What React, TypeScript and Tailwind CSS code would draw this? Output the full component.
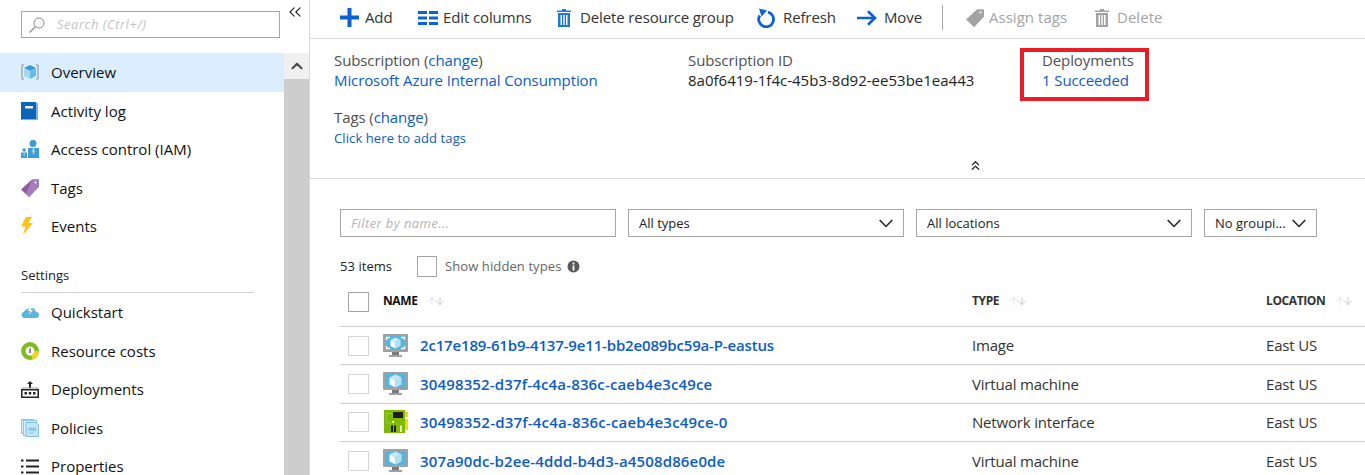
import React from "react";
import { ChevronUp, ChevronsLeft, ChevronsUp, ArrowUp, ArrowDown } from "lucide-react";

const font = "font-['Open_Sans','Noto_Sans',sans-serif]";

const CubeGlyph = ({ x, y, s }: { x: number; y: number; s: number }) => (
  <g transform={`translate(${x} ${y}) scale(${s})`}>
    <path d="M6 0 12 3 6 6 0 3Z" fill="#c4e8f7" />
    <path d="M0 3 6 6V13L0 10Z" fill="#f2fafd" />
    <path d="M12 3 6 6V13L12 10Z" fill="#b4e0f3" />
  </g>
);

const OverviewIcon = () => (
  <svg width="18" height="16" viewBox="0 0 18 16">
    <path d="M3 1H1V15H3M15 1H17V15H15" fill="none" stroke="#8a8a8a" strokeWidth="1" />
    <path d="M9 1 15 4 9 7 3 4Z" fill="#3a9bd1" />
    <path d="M3 4 9 7V15L3 12Z" fill="#a4d8f0" />
    <path d="M15 4 9 7V15L15 12Z" fill="#65bce4" />
  </svg>
);
const ActivityIcon = () => (
  <svg width="17" height="18" viewBox="0 0 17 18">
    <path d="M0 0H15V1H16.5V17.5H0Z" fill="#0a64b8" />
    <rect x="15" y="1" width="2" height="17" fill="#7db2e0" />
    <rect x="4" y="4" width="8" height="2.5" fill="#e6f1fb" />
  </svg>
);
const IamIcon = () => (
  <svg width="18" height="18" viewBox="0 0 18 18">
    <circle cx="12" cy="3.4" r="3.5" fill="#3e9ed3" />
    <path d="M7 8H18V18H7Z" fill="#3e9ed3" />
    <path d="M12 8 11 11 12.5 15 14 11 13 8Z" fill="#a8d6ee" />
    <circle cx="3.2" cy="10" r="1.8" fill="#3e9ed3" />
    <rect x="0" y="12.5" width="6" height="5.5" fill="#3e9ed3" />
    <rect x="2.7" y="13" width="1" height="3" fill="#a8d6ee" />
  </svg>
);
const TagIcon = ({ c = "#8d5ba6", d = "#a67dbb" }: { c?: string; d?: string }) => (
  <svg width="18" height="18" viewBox="0 0 18 18">
    <path d="M11 0.5H18V7.5L8 18 0 10.5Z" fill={c} />
    <path d="M11 0.5H18V7.5L8 18 5 14.5Z" fill={d} />
    <circle cx="14.5" cy="3.5" r="1" fill="#fff" />
  </svg>
);
const BoltIcon = () => (
  <svg width="12" height="18" viewBox="0 0 12 18">
    <path d="M5 0H11L7.5 6H12L2 18 4.5 9.5H0Z" fill="#fcc419" />
  </svg>
);
const CloudIcon = () => (
  <svg width="18" height="12" viewBox="0 0 18 12">
    <path d="M3.5 12A3.2 3.2 0 0 1 3 5.7 4 4 0 0 1 7 3 5 5 0 0 1 15 6 3 3 0 0 1 15 12Z" fill="#59b4de" />
    <path d="M10 0 7 5H9.5L7.5 9 12 4H9.7L11.5 0Z" fill="#fff" />
  </svg>
);
const CostIcon = () => (
  <svg width="18" height="18" viewBox="0 0 18 18">
    <circle cx="9" cy="9" r="6.7" fill="#fff" stroke="#7fba1f" strokeWidth="4.4" />
    <path d="M15.7 9A6.7 6.7 0 0 1 11 15.4" fill="none" stroke="#fcd116" strokeWidth="4.4" />
    <rect x="8.4" y="6.5" width="1.4" height="4.5" fill="#555" />
  </svg>
);
const DeployIcon = () => (
  <svg width="18" height="17" viewBox="0 0 18 17">
    <path d="M9 0 12 3H10V7H8V3H6Z" fill="#222" />
    <path d="M1 7H17" stroke="#999" />
    <rect x=".75" y="8.75" width="16.5" height="7.5" fill="#fff" stroke="#222" strokeWidth="1.5" />
    <path d="M3.5 11H6V13.5H3.5ZM7.75 11H10.25V13.5H7.75ZM12 11H14.5V13.5H12Z" fill="#222" />
  </svg>
);
const PolicyIcon = () => (
  <svg width="18" height="18" viewBox="0 0 18 18">
    <rect x=".5" y=".5" width="12" height="14" fill="#d7eef9" stroke="#8cc8e8" />
    <rect x="2.5" y="1.5" width="13" height="15" fill="#d7eef9" stroke="#8cc8e8" />
    <path d="M5 3.5H15L17.5 6V17.5H5Z" fill="#c5e5f5" stroke="#7dc1e5" />
    <path d="M7.5 8.5H15V12H7.5ZM7.5 13.5H12.5V14.5H7.5Z" fill="#8fc8e6" />
  </svg>
);
const ListIcon = () => (
  <svg width="18" height="17" viewBox="0 0 18 17">
    <path d="M0 1.5H2.5V3.5H0ZM0 7.5H2.5V9.5H0ZM0 13.5H2.5V15.5H0Z" fill="#222" />
    <path d="M5 2.5H18M5 8.5H18M5 14.5H18" stroke="#222" strokeWidth="2" />
  </svg>
);

const Monitor = ({ image }: { image?: boolean }) => (
  <svg width="26" height="24" viewBox="0 0 26 24">
    <rect x="0" y="0" width="25" height="18" rx="1" fill="#a0a1a2" />
    <rect x="2" y="2" width="21" height="14" fill="#59b4d9" />
    <rect x="9" y="18" width="7" height="3" fill="#7a7a7a" />
    <rect x="6" y="21" width="13" height="2" fill="#a0a1a2" />
    {image && (
      <path d="M3.5 6V3.5H7M18 3.5H21.5V6M21.5 12V14.5H18M7 14.5H3.5V12" fill="none" stroke="#fff" strokeWidth="1.3" />
    )}
    <CubeGlyph x={image ? 7.5 : 6.5} y={image ? 3.5 : 2.5} s={image ? 0.84 : 1} />
  </svg>
);
const Nic = () => (
  <svg width="26" height="24" viewBox="0 0 26 24">
    <rect x="1" y="0" width="21" height="23" fill="#7fba00" />
    <rect x="22" y="2" width="3" height="5" fill="#fcd116" />
    <rect x="22" y="9" width="3" height="11" fill="#fcd116" />
    <rect x="10" y="2" width="10" height="6" fill="#1e1e1e" />
    <path d="M3.5 3.5H10M3.5 3.5V13H8" fill="none" stroke="#a5d14a" strokeWidth=".8" />
    <rect x="8" y="15.5" width="2" height="6.5" fill="#1e1e1e" />
    <rect x="11" y="15.5" width="2" height="6.5" fill="#1e1e1e" />
    <rect x="17" y="15.5" width="2" height="6.5" fill="#e4efc8" />
    <rect x="9" y="11" width="2" height="2" fill="#e4efc8" />
  </svg>
);

const Trash = ({ c }: { c: string }) => (
  <svg width="14" height="18" viewBox="0 0 14 18">
    <path d="M5 0H9V1.5H14V3H0V1.5H5Z" fill={c} />
    <path d="M1 4H13V18H1ZM3.5 6V16H5V6ZM6.3 6V16H7.7V6ZM9 6V16H10.5V6Z" fill={c} fillRule="evenodd" />
  </svg>
);

const SearchGlyph = () => (
  <svg width="16" height="16" viewBox="0 0 16 16">
    <circle cx="10" cy="6" r="5" fill="none" stroke="#8a8a8a" strokeWidth="1" />
    <path d="M6.5 9.5 .5 15.5" stroke="#8a8a8a" strokeWidth="1.2" />
  </svg>
);

const Caret = () => (
  <svg width="14" height="9" viewBox="0 0 14 9">
    <path d="M.7 1 7 7.5 13.3 1" fill="none" stroke="#222" strokeWidth="1.5" />
  </svg>
);

const nav1 = [
  { t: "Overview", i: <OverviewIcon />, active: true },
  { t: "Activity log", i: <ActivityIcon /> },
  { t: "Access control (IAM)", i: <IamIcon /> },
  { t: "Tags", i: <TagIcon /> },
  { t: "Events", i: <BoltIcon /> },
];
const nav2 = [
  { t: "Quickstart", i: <CloudIcon /> },
  { t: "Resource costs", i: <CostIcon /> },
  { t: "Deployments", i: <DeployIcon /> },
  { t: "Policies", i: <PolicyIcon /> },
  { t: "Properties", i: <ListIcon /> },
];

const NavRow = ({ t, i, active }: { t: string; i: React.ReactNode; active?: boolean }) => (
  <div className={`flex h-[38.5px] shrink-0 items-center pl-[21px] text-[15px] text-[#111] ${active ? "bg-[#daeeff]" : ""}`}>
    <span className="flex w-[30px] shrink-0 items-center">{i}</span>
    <span>{t}</span>
  </div>
);

const Tool = ({ icon, label, off, cls }: { icon: React.ReactNode; label: string; off?: boolean; cls: string }) => (
  <div className={`flex items-center ${cls} text-[15px] ${off ? "tracking-[0.03px] text-[#a3a3a3]" : "tracking-[-0.12px] text-[#333]"}`}>
    {icon}
    <span>{label}</span>
  </div>
);

const Select = ({ label, w }: { label: string; w: string }) => (
  <div className={`flex h-[28px] ${w} shrink-0 items-center justify-between border border-[#a6a6a6] pl-[10px] pr-[10px] text-[13px] text-[#222]`}>
    <span className="pt-[2px]">{label}</span>
    <Caret />
  </div>
);

const Sort = () => (
  <span className="ml-[9px] flex">
    <ArrowUp size={12} strokeWidth={1} color="#c4c4c4" className="-mr-[4px]" />
    <ArrowDown size={12} strokeWidth={1} color="#9a9a9a" />
  </span>
);

const rows = [
  { n: "2c17e189-61b9-4137-9e11-bb2e089bc59a-P-eastus", t: "Image", i: <Monitor image />, c: "tracking-[-0.16px]" },
  { n: "30498352-d37f-4c4a-836c-caeb4e3c49ce", t: "Virtual machine", i: <Monitor />, c: "tracking-[0.15px]" },
  { n: "30498352-d37f-4c4a-836c-caeb4e3c49ce-0", t: "Network interface", i: <Nic />, c: "tracking-[0.19px]" },
  { n: "307a90dc-b2ee-4ddd-b4d3-a4508d86e0de", t: "Virtual machine", i: <Monitor />, c: "tracking-[0.15px]" },
];

export default function App() {
  return (
    <div className={`flex h-[475px] w-[1365px] overflow-hidden bg-white ${font}`}>
      <aside className="relative flex w-[310px] shrink-0 border-r border-[#d9d9d9]">
        <div className="flex w-[284px] flex-col">
          <div className="flex h-[53px] shrink-0 items-start pl-[21px] pt-[11px]">
            <div className="flex h-[27px] w-[259px] items-center border border-[#a6a6a6] pl-[7px] text-[13px] italic tracking-[0.5px] text-[#c4c4c4]">
              <SearchGlyph />
              <span className="ml-[12px]">Search (Ctrl+/)</span>
            </div>
          </div>
          {nav1.map((n) => (
            <NavRow key={n.t} {...n} />
          ))}
          <div className="mx-[21px] h-[47.5px] w-[233px] shrink-0 border-b border-[#d2d2d2] pt-[20px] text-[13px] font-medium leading-[18px] text-[#222]">
            Settings
          </div>
          {nav2.map((n) => (
            <NavRow key={n.t} {...n} />
          ))}
        </div>
        <div className="mt-[53px] flex w-[25px] flex-col bg-[#cdcdcd]">
          <div className="flex h-[26px] items-center justify-center bg-[#f0f0f0]">
            <ChevronUp size={18} strokeWidth={3} color="#505050" />
          </div>
        </div>
        <ChevronsLeft size={20} strokeWidth={1.3} color="#222" className="absolute left-[285px] top-[2px]" />
      </aside>

      <main className="flex min-w-0 flex-1 flex-col">
        <div className="flex h-[39px] shrink-0 items-center border-b border-[#d9d9d9] pb-[3px] pl-[30px]">
          <Tool
            cls="w-[78px]"
            label="Add"
            icon={
              <svg width="19" height="19" viewBox="0 0 19 19" className="mr-[6px]">
                <path d="M7.5 0H11.5V7.5H19V11.5H11.5V19H7.5V11.5H0V7.5H7.5Z" fill="#0b62d0" />
              </svg>
            }
          />
          <Tool
            cls="w-[139px]"
            label="Edit columns"
            icon={
              <svg width="20" height="14" viewBox="0 0 20 14" className="mr-[5px]">
                <path d="M0 0H9V3H0ZM11 0H20V3H11ZM0 5.5H9V8.5H0ZM11 5.5H20V8.5H11ZM0 11H9V14H0ZM11 11H20V14H11Z" fill="#0b62d0" />
              </svg>
            }
          />
          <Tool
            cls="w-[200px]"
            label="Delete resource group"
            icon={
              <span className="mr-[9px] flex">
                <Trash c="#1e78d2" />
              </span>
            }
          />
          <Tool
            cls="w-[100px]"
            label="Refresh"
            icon={
              <svg width="19" height="20" viewBox="0 0 19 20" className="mr-[7px]">
                <path d="M11 4.2A7.4 7.4 0 1 1 2.8 7.5" fill="none" stroke="#0b62d0" strokeWidth="2.8" />
                <path d="M2 0.5 10 2.5 4.5 8.5Z" fill="#0b62d0" />
              </svg>
            }
          />
          <Tool
            cls="w-[85px]"
            label="Move"
            icon={
              <svg width="20" height="16" viewBox="0 0 20 16" className="mr-[7px]">
                <path d="M0 8H18M11 1.2 18 8 11 14.8" fill="none" stroke="#0b62d0" strokeWidth="2.6" />
              </svg>
            }
          />
          <div className="mr-[23px] h-[25px] w-px bg-[#a6a6a6]" />
          <Tool cls="w-[129px]" off label="Assign tags" icon={<span className="mr-[5px] flex"><TagIcon c="#a3a3a3" d="#a3a3a3" /></span>} />
          <Tool cls="w-[80px]" off label="Delete" icon={<span className="mr-[8px] flex"><Trash c="#a3a3a3" /></span>} />
        </div>

        <div className="flex h-[140px] shrink-0 flex-col border-b border-[#d9d9d9] pl-[24px] pt-[11px]">
          <div className="flex h-[40px] shrink-0 text-[15px] leading-[20px] tracking-[-0.1px]">
            <div className="w-[354px]">
              <div className="text-[#505050]">
                Subscription (<span className="text-[#0b5cc9]">change</span>)
              </div>
              <div className="text-[#0b5cc9]">Microsoft Azure Internal Consumption</div>
            </div>
            <div className="w-[354px]">
              <div className="text-[#505050]">Subscription ID</div>
              <div className="tracking-[0.01px] text-[#222]">8a0f6419-1f4c-45b3-8d92-ee53be1ea443</div>
            </div>
            <div className="-ml-[18px] mt-[2px] h-[45px] w-[121px] shrink-0 pl-[18px] outline-4 outline-[#ed1c24]">
              <div className="-mt-[2px] text-[#505050]">Deployments</div>
              <div className="text-[#0b5cc9]">1 Succeeded</div>
            </div>
          </div>
          <div className="mt-[17px] text-[15px] leading-[20px] tracking-[-0.1px] text-[#505050]">
            Tags (<span className="text-[#0b5cc9]">change</span>)
          </div>
          <div className="mt-[1px] text-[13px] leading-[20px] tracking-[0.1px] text-[#0b5cc9]">Click here to add tags</div>
          <div className="mt-[10px] flex w-[1282px] justify-center">
            <ChevronsUp size={15} strokeWidth={2} color="#222" />
          </div>
        </div>

        <div className="flex shrink-0 gap-[12px] pl-[30px] pt-[30px]">
          <div className="flex h-[28px] w-[276px] shrink-0 items-center border border-[#a6a6a6] pl-[10px] pt-[1px] text-[13px] italic tracking-[0.4px] text-[#b4b4b4]">
            Filter by name...
          </div>
          <Select label="All types" w="w-[276px]" />
          <Select label="All locations" w="w-[276px]" />
          <Select label="No groupi..." w="w-[113px]" />
        </div>

        <div className="mt-[18px] flex h-[22px] shrink-0 items-center pl-[30px] text-[13px]">
          <span className="w-[77px] pt-[2px] tracking-[0.05px] text-[#222]">53 items</span>
          <span className="mr-[8px] h-[21px] w-[20px] border border-[#a6a6a6]" />
          <span className="pt-[1px] tracking-[0.1px] text-[#666]">Show hidden types</span>
          <svg width="13" height="13" viewBox="0 0 13 13" className="ml-[6px]">
            <circle cx="6.5" cy="6.5" r="6" fill="#5a5a5a" />
            <path d="M5.6 5.5H7.4V10.5H5.6ZM5.6 2.6H7.4V4.4H5.6Z" fill="#fff" />
          </svg>
        </div>

        <div className="ml-[30px] flex flex-col">
          <div className="flex h-[50px] items-center border-b border-[#cfcfcf]">
            <span className="ml-[8px] mr-[14px] h-[20px] w-[21px] shrink-0 border border-[#a6a6a6]" />
            <div className="flex w-[589px] shrink-0 items-center pb-[2px] text-[12px] font-bold tracking-[-0.4px] text-[#111]">
              NAME
              <Sort />
            </div>
            <div className="flex w-[294px] shrink-0 items-center pb-[2px] text-[12px] font-bold tracking-[-0.4px] text-[#333]">
              TYPE
              <Sort />
            </div>
            <div className="flex items-center pb-[2px] text-[12px] font-bold tracking-[-0.4px] text-[#333]">
              LOCATION
              <Sort />
            </div>
          </div>
          {rows.map((r) => (
            <div key={r.n + r.t} className="flex h-[38.4px] shrink-0 items-center border-b border-[#cfcfcf] text-[15px] tracking-[-0.18px]">
              <span className="ml-[8px] mr-[14px] h-[20px] w-[21px] shrink-0 border border-[#d4d4d4]" />
              <span className="flex w-[37px] shrink-0">{r.i}</span>
              <span className={`w-[552px] shrink-0 font-semibold text-[#0b5cc9] ${r.c}`}>{r.n}</span>
              <span className="w-[294px] shrink-0 text-[#333]">{r.t}</span>
              <span className="text-[#333]">East US</span>
            </div>
          ))}
        </div>
      </main>
    </div>
  );
}
